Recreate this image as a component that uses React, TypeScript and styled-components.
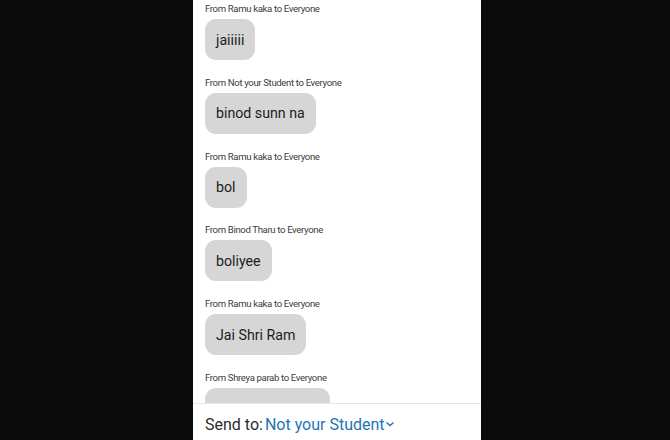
import React from "react"
import styled, { createGlobalStyle } from "styled-components"

const GlobalStyle = createGlobalStyle`
  html, body {
    margin: 0;
    padding: 0;
    background: #000;
    font-family: Roboto, "Noto Sans", Arial, sans-serif;
  }
`

interface Message {
  from: string;
  text?: string;
  width?: number; // bubble still scrolling in under the footer
}

const messages: Message[] = [
  { from: "Ramu kaka", text: "jaiiiii" },
  { from: "Not your Student", text: "binod sunn na" },
  { from: "Ramu kaka", text: "bol" },
  { from: "Binod Tharu", text: "boliyee" },
  { from: "Ramu kaka", text: "Jai Shri Ram" },
  { from: "Shreya parab", width: 125 },
]

const Screen = styled.div`
  width: 670px;
  height: 440px;
  background: #0b0b0b;
  display: flex;
  justify-content: center;
`

const Phone = styled.div`
  width: 288px;
  height: 440px;
  margin-left: 4px;
  background: #fff;
  display: flex;
  flex-direction: column;
  overflow: hidden;
`

const ChatList = styled.div`
  flex: 1;
  overflow: hidden;
  padding: 3px 12px 0;
  display: flex;
  flex-direction: column;
  gap: 16.8px;
`

const Entry = styled.div`
  display: flex;
  flex-direction: column;
  align-items: flex-start;
  gap: 4px;
`

const Sender = styled.div`
  font-size: 9.6px;
  line-height: 12px;
  letter-spacing: -0.36px;
  color: #3c3c3c;
`

const Bubble = styled.div<{ $width?: number }>`
  background: #d6d6d6;
  border-radius: 11px;
  height: 41px;
  width: ${(p) => (p.$width ? `${p.$width}px` : "auto")};
  box-sizing: border-box;
  padding: 0 11px;
  display: flex;
  align-items: center;
  font-size: 14.2px;
  color: #1c1c1c;
  flex-shrink: 0;
`

const Footer = styled.div`
  height: 37px;
  flex-shrink: 0;
  box-sizing: border-box;
  border-top: 1px solid #e6e6e6;
  background: #fff;
  display: flex;
  align-items: center;
  padding: 5px 12px 0;
  font-size: 16px;
  color: #2b2b2b;
`

const Recipient = styled.span`
  color: #2474b5;
  margin-left: 2px;
  display: inline-flex;
  align-items: center;
`

const Chevron = styled.svg`
  width: 10px;
  height: 6px;
  margin-top: -1px;
`

const App = () => (
  <Screen>
    <GlobalStyle />
    <Phone>
      <ChatList>
        {messages.map((m, i) => (
          <Entry key={i}>
            <Sender>From {m.from} to Everyone</Sender>
            <Bubble $width={m.width}>{m.text}</Bubble>
          </Entry>
        ))}
      </ChatList>
      <Footer>
        Send to:
        <Recipient>
          Not your Student
          <Chevron viewBox="0 0 10 6">
            <path d="M1.5 1.5 L5 4.5 L8.5 1.5" fill="none" stroke="#2474b5" strokeWidth="1.5" />
          </Chevron>
        </Recipient>
      </Footer>
    </Phone>
  </Screen>
)

export default App
